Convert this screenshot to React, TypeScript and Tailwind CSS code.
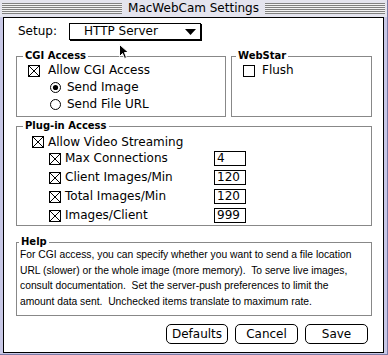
import type { ReactNode } from 'react';

function CheckBox({ checked }: { checked: boolean }) {
  return (
    <svg width="12" height="12" viewBox="0 0 12 12" className="shrink-0" shapeRendering="crispEdges">
      <rect x="0.5" y="0.5" width="11" height="11" fill="#fff" stroke="#000" />
      {checked && <path d="M1 1L11 11M11 1L1 11" stroke="#000" />}
    </svg>
  );
}

function Radio({ on }: { on: boolean }) {
  return (
    <svg width="11" height="11" viewBox="0 0 11 11" className="shrink-0">
      <circle cx="5.5" cy="5.5" r="5" fill="#fff" stroke="#000" />
      {on && <circle cx="5.5" cy="5.5" r="2.6" fill="#000" />}
    </svg>
  );
}

// group box with its title sitting on the top border
function Group({ title, className, titleClass, children }: { title: string; className: string; titleClass: string; children: ReactNode }) {
  return (
    <div className={`relative border border-[#888888] ${className}`}>
      <span className={`absolute -top-[6px] bg-white px-[2px] text-[10px] font-bold leading-[10px] ${titleClass}`}>{title}</span>
      {children}
    </div>
  );
}

const limits = [
  { label: 'Max Connections', value: '4' },
  { label: 'Client Images/Min', value: '120' },
  { label: 'Total Images/Min', value: '120' },
  { label: 'Images/Client', value: '999' },
];

const helpLines = [
  'For CGI access, you can specify whether you want to send a file location',
  'URL (slower) or the whole image (more memory).  To serve live images,',
  'consult documentation.  Set the server-push preferences to limit the',
  'amount data sent.  Unchecked items translate to maximum rate.',
];

export default function App() {
  return (
    <div className="relative flex h-[355px] w-[388px] flex-col border-r border-b border-[#7a7aa6] bg-[#c8c8e6] font-['DejaVu_Sans',sans-serif] text-[12px] text-black">
      {/* title bar */}
      <div className="flex h-[17px] items-center gap-[6px] bg-[#e4e4ee] px-[2px]">
        <div className="h-[11px] flex-1 bg-[repeating-linear-gradient(to_bottom,#808080_0px,#808080_1px,#f2f2f2_1px,#f2f2f2_2px)]" />
        <span className="leading-[17px]">MacWebCam Settings</span>
        <div className="h-[11px] flex-1 bg-[repeating-linear-gradient(to_bottom,#808080_0px,#808080_1px,#f2f2f2_1px,#f2f2f2_2px)]" />
      </div>

      <div className="mb-[1px] ml-[3px] mr-[3px] flex flex-1 flex-col border border-black bg-white pl-[12px] pr-[11px] pt-[5px]">
        {/* setup popup */}
        <div className="flex h-[17px] items-center pl-[2px]">
          <span className="w-[51px] leading-[17px]">Setup:</span>
          <div className="flex h-[17px] w-[132px] items-center justify-between border border-black bg-white pl-[14px] pr-[4px] leading-[15px] shadow-[1px_1px_0_#000]">
            <span>HTTP Server</span>
            <svg width="11" height="6" viewBox="0 0 11 6">
              <polygon points="0,0 11,0 5.5,6" fill="#000" />
            </svg>
          </div>
        </div>

        <div className="mt-[16px] flex gap-[5px]">
          <Group title="CGI Access" className="h-[61px] w-[210px]" titleClass="left-[6px]">
            <div className="flex flex-col pl-[11px] pt-[5px] leading-[17px]">
              <div className="flex h-[17px] items-center gap-[8px]">
                <CheckBox checked />
                <span>Allow CGI Access</span>
              </div>
              <div className="flex h-[17px] items-center gap-[6px] pl-[22px]">
                <Radio on />
                <span>Send Image</span>
              </div>
              <div className="flex h-[17px] items-center gap-[6px] pl-[22px]">
                <Radio on={false} />
                <span>Send File URL</span>
              </div>
            </div>
          </Group>
          <Group title="WebStar" className="h-[61px] w-[141px]" titleClass="left-[4px]">
            <div className="flex flex-col pl-[11px] pt-[5px] leading-[17px]">
              <div className="flex h-[17px] items-center gap-[7px]">
                <CheckBox checked={false} />
                <span>Flush</span>
              </div>
            </div>
          </Group>
        </div>

        <Group title="Plug-in Access" className="mt-[9px] h-[100px] w-[356px]" titleClass="left-[6px]">
          <div className="flex flex-col pl-[15px] pt-[6px]">
            <div className="flex h-[18px] items-center gap-[4px] leading-[18px]">
              <CheckBox checked />
              <span>Allow Video Streaming</span>
            </div>
            <div className="flex flex-col gap-[4px] pl-[17px]">
              {limits.map((row) => (
                <div key={row.label} className="flex h-[15px] items-center">
                  <div className="flex w-[165px] items-center gap-[4px] leading-[15px]">
                    <CheckBox checked />
                    <span>{row.label}</span>
                  </div>
                  <div className="h-[15px] w-[32px] border border-black pl-[2px] leading-[13px]">{row.value}</div>
                </div>
              ))}
            </div>
          </div>
        </Group>

        <Group title="Help" className="mt-[16px] h-[74px] w-[356px]" titleClass="left-[2px]">
          <div className="pl-[3px] pt-[4px] font-['Liberation_Sans',sans-serif] text-[10.3px] leading-[15.5px]">
            {helpLines.map((line) => (
              <div key={line} className="whitespace-pre">{line}</div>
            ))}
          </div>
        </Group>

        <div className="mt-[8px] flex justify-end gap-[7px] pr-[4px]">
          <button className="h-[20px] w-[62px] rounded-[5px] border border-black bg-white leading-[18px]">Defaults</button>
          <button className="h-[20px] w-[63px] rounded-[5px] border border-black bg-white leading-[18px]">Cancel</button>
          <button className="h-[20px] w-[63px] rounded-[5px] border border-black bg-white leading-[18px]">Save</button>
        </div>
      </div>

      {/* mouse pointer */}
      <svg className="absolute left-[119px] top-[44px]" width="11" height="16" viewBox="0 0 11 16">
        <path d="M0.5 0.5L0.5 12.5L3.5 9.5L5.5 14.5L7.5 13.5L5.5 8.5L9.5 8.5Z" fill="#000" stroke="#fff" />
      </svg>
    </div>
  );
}
